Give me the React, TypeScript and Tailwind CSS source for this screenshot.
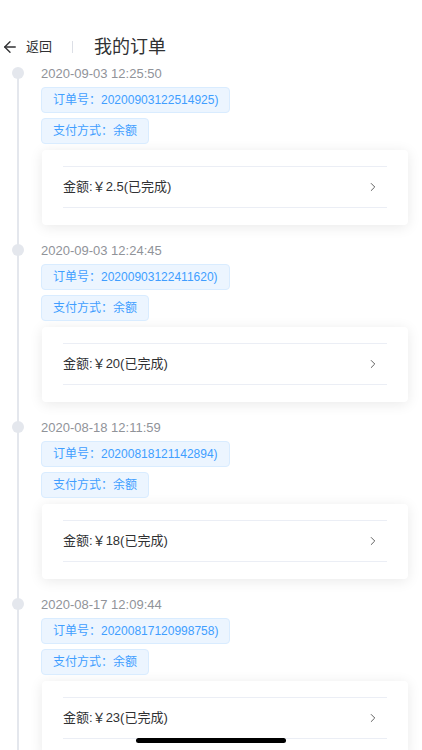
import { ArrowLeft, ChevronRight } from 'lucide-react';

interface Order {
  time: string;
  orderNo: string;
  amount: string;
}

const orders: Order[] = [
  { time: '2020-09-03 12:25:50', orderNo: '20200903122514925', amount: '2.5' },
  { time: '2020-09-03 12:24:45', orderNo: '20200903122411620', amount: '20' },
  { time: '2020-08-18 12:11:59', orderNo: '20200818121142894', amount: '18' },
  { time: '2020-08-17 12:09:44', orderNo: '20200817120998758', amount: '23' },
];

const font = "font-['Liberation_Sans','Noto_Sans_CJK_SC',sans-serif]";

function OrderItem({ order, first }: { order: Order; first: boolean }) {
  return (
    <div className="relative pl-[41px] pr-[14px] pb-[17px]">
      {/* Timeline line */}
      <div
        className={`absolute left-[17px] bottom-0 w-[2px] bg-[#e4e7ed] ${first ? 'top-[8px]' : 'top-0'}`}
      ></div>
      {/* Dot */}
      <div className="absolute left-[12px] top-[2px] w-[12px] h-[12px] rounded-full bg-[#e4e7ed]"></div>

      <div className="h-[18px] leading-[18px] text-[13px] text-[#909399]">{order.time}</div>

      <div className="mt-[4px] flex flex-col items-start gap-[5px]">
        <span className="h-[26px] leading-[24px] px-[11px] rounded-[4px] bg-[#ecf5ff] border border-[#d9ecff] text-[12px] text-[#409eff]">
          订单号：{order.orderNo})
        </span>
        <span className="h-[26px] leading-[24px] px-[11px] rounded-[4px] bg-[#ecf5ff] border border-[#d9ecff] text-[12px] text-[#409eff]">
          支付方式：余额
        </span>
      </div>

      {/* Card */}
      <div className="mt-[6px] ml-[1px] h-[75px] bg-white rounded-[4px] shadow-[0_2px_14px_rgba(0,0,0,0.09)] px-[21px] pt-[16px]">
        <div className="h-[42px] border-t border-b border-[#ebeef5] flex items-center justify-between">
          <span className="text-[13px] text-[#303133]">金额:￥{order.amount}(已完成)</span>
          <ChevronRight className="w-[14px] h-[14px] mr-[7px] text-[#4a4a4a]" strokeWidth={1.5} />
        </div>
      </div>
    </div>
  );
}

export default function App() {
  return (
    <div className={`relative w-[422px] h-[750px] overflow-hidden bg-white ${font}`}>
      {/* Header */}
      <div className="pt-[29px] h-[65px]">
        <div className="h-[36px] flex items-center">
          <ArrowLeft className="ml-[1px] w-[18px] h-[18px] text-[#303133]" strokeWidth={1.8} />
          <span className="ml-[7px] text-[13px] text-[#303133]">返回</span>
          <span className="ml-[20px] w-px h-[12px] bg-[#dcdfe6]"></span>
          <span className="ml-[21px] text-[18px] text-[#303133]">我的订单</span>
        </div>
      </div>

      {/* Timeline */}
      <div>
        {orders.map((o, i) => (
          <OrderItem key={o.orderNo} order={o} first={i === 0} />
        ))}
      </div>

      {/* Home indicator */}
      <div className="absolute left-[136px] bottom-[7px] w-[150px] h-[5px] rounded-full bg-black"></div>
    </div>
  );
}
